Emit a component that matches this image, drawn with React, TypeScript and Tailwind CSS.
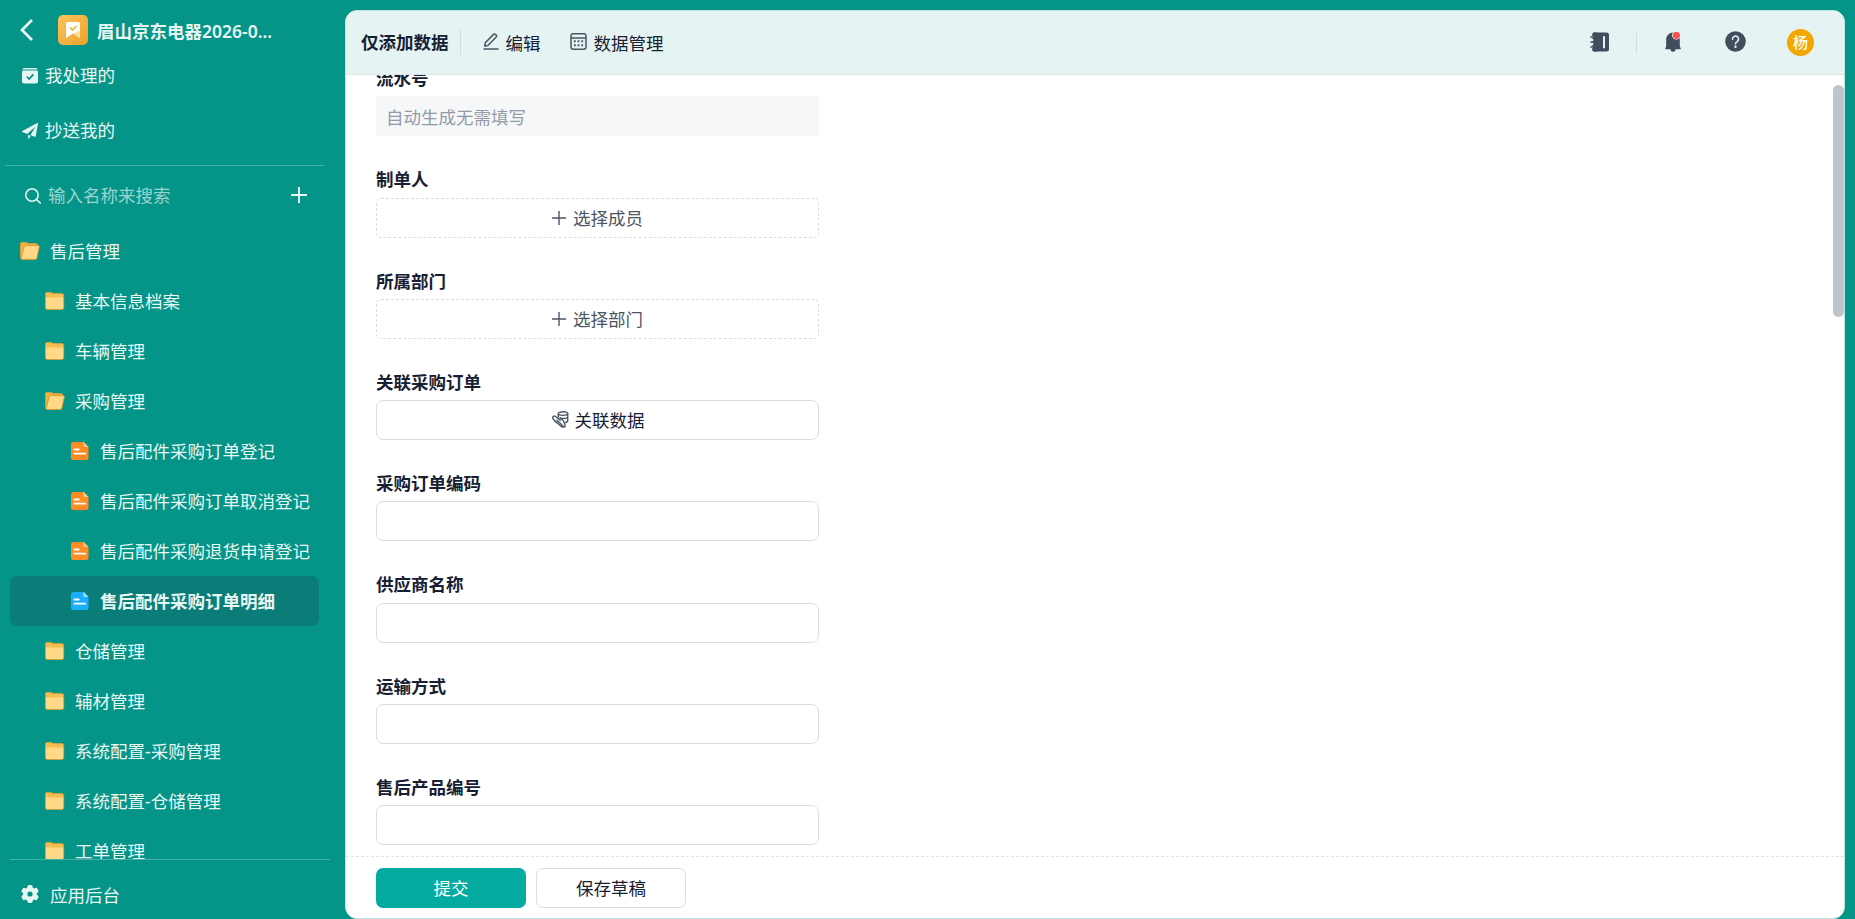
import React from "react";

type NodeKind = "folder" | "open" | "form" | "active";

interface TreeNode {
  label: string;
  kind: NodeKind;
  level: 0 | 1 | 2;
}

const TREE: TreeNode[] = [
  { label: "售后管理", kind: "open", level: 0 },
  { label: "基本信息档案", kind: "folder", level: 1 },
  { label: "车辆管理", kind: "folder", level: 1 },
  { label: "采购管理", kind: "open", level: 1 },
  { label: "售后配件采购订单登记", kind: "form", level: 2 },
  { label: "售后配件采购订单取消登记", kind: "form", level: 2 },
  { label: "售后配件采购退货申请登记", kind: "form", level: 2 },
  { label: "售后配件采购订单明细", kind: "active", level: 2 },
  { label: "仓储管理", kind: "folder", level: 1 },
  { label: "辅材管理", kind: "folder", level: 1 },
  { label: "系统配置-采购管理", kind: "folder", level: 1 },
  { label: "系统配置-仓储管理", kind: "folder", level: 1 },
  { label: "工单管理", kind: "folder", level: 1 },
];

const INDENT = ["pl-[10px]", "pl-[35px]", "pl-[60px]"];

interface Field {
  label: string;
  type: "serial" | "member" | "dept" | "relation" | "input";
}

const FIELDS: Field[] = [
  { label: "流水号", type: "serial" },
  { label: "制单人", type: "member" },
  { label: "所属部门", type: "dept" },
  { label: "关联采购订单", type: "relation" },
  { label: "采购订单编码", type: "input" },
  { label: "供应商名称", type: "input" },
  { label: "运输方式", type: "input" },
  { label: "售后产品编号", type: "input" },
];

function FolderIcon() {
  return (
    <svg width="20" height="20" viewBox="0 0 20 20">
      <path
        d="M.4 3A1.600 1.600 0 0 1 2 1.400h3.600c.5 0 .9.1 1.300.4L8.200 2.600H17A1.800 1.800 0 0 1 18.700 4.400v12.200a1.800 1.800 0 0 1-1.800 1.800H2.200A1.800 1.800 0 0 1 .4 16.600z"
        fill="#f7bd52"
        stroke="#e3a02f"
        strokeWidth=".8"
      />
      <path d="M.9 6.400h17.300v10.100a1.500 1.500 0 0 1-1.500 1.500H2.400a1.500 1.500 0 0 1-1.500-1.500z" fill="#ffd988" />
    </svg>
  );
}

function OpenFolderIcon() {
  return (
    <svg width="20" height="20" viewBox="0 0 20 20">
      <path
        d="M.4 3A1.600 1.600 0 0 1 2 1.400h3.600c.5 0 .9.1 1.300.4L8.200 2.600h7.600a1.800 1.800 0 0 1 1.800 1.800V12l-4 6H2a1.600 1.600 0 0 1-1.600-1.600z"
        fill="#f0b244"
        stroke="#e3a02f"
        strokeWidth=".8"
      />
      <path
        d="M5.600 4.600h12.200c1.200 0 1.700.7 1.400 1.700l-2.300 10.700c-.2.900-.8 1.400-1.700 1.400H2.400c-.9 0-1.300-.6-1.100-1.400L4 6C4.200 5.100 4.700 4.600 5.600 4.600z"
        fill="#ffd988"
        stroke="#d99a2c"
        strokeWidth=".9"
      />
    </svg>
  );
}

function FormIcon({ active }: { active: boolean }) {
  return (
    <svg width="18" height="20" viewBox="0 0 18 20">
      <path
        d="M2.500 1h10l5 5v10.500a2.500 2.500 0 0 1-2.500 2.500H2.500A2.500 2.500 0 0 1 0 16.500v-13A2.500 2.500 0 0 1 2.500 1z"
        fill={active ? "#1baeff" : "#ff8c24"}
      />
      <path d="M12.300.6l5.300 5.300h-3.800a1.500 1.500 0 0 1-1.500-1.500z" fill={active ? "#a3dcfb" : "#fbc48a"} />
      <path d="M3.400 8.500h4.300M3.400 12.700h10.800" stroke="#fff" strokeWidth="1.800" strokeLinecap="round" />
    </svg>
  );
}

function NodeIcon({ kind }: { kind: NodeKind }) {
  if (kind === "folder") return <FolderIcon />;
  if (kind === "open") return <OpenFolderIcon />;
  return (
    <span className="pl-[1px]">
      <FormIcon active={kind === "active"} />
    </span>
  );
}

function PlusIcon() {
  return (
    <svg width="14" height="14" viewBox="0 0 14 14" fill="none" stroke="currentColor" strokeWidth="1.400">
      <path d="M7 0v14M0 7h14" />
    </svg>
  );
}

// Hand holding a stack of data
function RelationIcon() {
  return (
    <svg width="17" height="17" viewBox="0 0 17 17" fill="none" stroke="#4b5563" strokeWidth="1.400" strokeLinejoin="round" strokeLinecap="round">
      <ellipse cx="11" cy="2.600" rx="4.700" ry="1.800" />
      <path d="M6.300 2.600v3.600M15.700 2.600v7.200c0 1-1.100 1.600-2.700 1.800M8.500 7.100c3.200.9 7.200.3 7.200-1" />
      <path d="M8.200 9.200L3.300 5.300C1.800 4.300.1 6 1 7.600c1.100 2.100 2.800 3.600 4.700 4.700" />
      <path d="M4.600 9.200l3.100 2.400 3.500 3.900c1.100 1 2.500 0 1.900-1.400L11.400 9.800 8 6.900" />
      <path d="M5.700 12.300l3.900 3.300c.6.500 1.400.5 1.900 0" />
    </svg>
  );
}

function Sidebar() {
  return (
    <aside className="flex w-[345px] shrink-0 flex-col text-[#e8f6f4]">
      <div className="flex h-12 shrink-0 items-center pl-5 pt-[12px]">
        <svg width="13" height="22" viewBox="0 0 13 22" fill="none" stroke="#e8f6f4" strokeWidth="2.800">
          <path d="M12 1L2 11l10 10" />
        </svg>
        <div className="ml-[25px] flex h-[30px] w-[30px] items-center justify-center rounded-[5px] bg-linear-to-br from-[#fbc25c] to-[#eda323]">
          <svg width="14" height="16" viewBox="0 0 14 16">
            <path d="M0 1.500A1.500 1.500 0 0 1 1.500 0h11A1.500 1.500 0 0 1 14 1.500V16l-7-4.500L0 16z" fill="#fff" />
            <path d="M14 8v8l-7-4.500L0 16z" fill="#fbdca5" />
            <path d="M4 5.500l2.500 2.500L10.500 4" fill="none" stroke="#f2ae3a" strokeWidth="1.600" />
          </svg>
        </div>
        <span className="ml-[9px] whitespace-nowrap pt-[3px] font-bold">
          眉山京东电器<span className="font-semibold">2026-0...</span>
        </span>
      </div>

      {/* Process shortcuts */}
      <div className="flex h-[55px] shrink-0 items-center gap-[7px] pl-[22px]">
        <svg width="16" height="16" viewBox="0 0 16 16">
          <path d="M2 0h12a1.500 1.500 0 0 1 1.400 1.500H.6A1.500 1.500 0 0 1 2 0z" fill="#e8f6f4" />
          <path d="M.5 2.600h15L16 4v9.500a2 2 0 0 1-2 2H2a2 2 0 0 1-2-2V4z" fill="#e8f6f4" />
          <path d="M4.800 8.500L7.200 11l4.200-4.700" fill="none" stroke="#059488" strokeWidth="1.800" />
        </svg>
        <span>我处理的</span>
      </div>
      <div className="flex h-[55px] shrink-0 items-center gap-[7px] pl-[22px]">
        <svg width="16" height="16" viewBox="0 0 16 16" fill="#e8f6f4">
          <path d="M15.200.1c.5-.3.9 0 .8.500l-2.300 12.700c-.1.500-.5.700-1 .5L8.500 12l5-8.500L5.200 11 .4 9c-.6-.2-.5-.8 0-1z" />
          <path d="M6.200 11.700l2.500 1-1.400 2.600c-.4.7-1.100.5-1.100-.2z" />
        </svg>
        <span>抄送我的</span>
      </div>
      <div className="ml-[5px] mt-[7px] h-px w-[319px] shrink-0 bg-[#46b0a8]" />

      {/* Search */}
      <div className="flex h-[60px] shrink-0 items-center pb-[1px] pl-[25px]">
        <svg width="16" height="16" viewBox="0 0 16 16" fill="none" stroke="#e8f6f4" strokeWidth="1.500">
          <circle cx="7" cy="7" r="6.200" />
          <path d="M11.500 11.500l3.800 3.600" strokeLinecap="round" />
        </svg>
        <span className="ml-[7px] text-[#9bd4cf]">输入名称来搜索</span>
        <svg className="ml-auto mr-[38px] -mt-[2px] shrink-0" width="16" height="16" viewBox="0 0 16 16" stroke="#e8f6f4" strokeWidth="2">
          <path d="M8 0v16M0 8h16" />
        </svg>
      </div>

      {/* Form tree */}
      <nav className="h-[633px] shrink-0 overflow-hidden px-[10px]">
        {TREE.map((n) => (
          <div
            key={n.label}
            className={`flex h-[50px] w-[309px] items-center rounded-[7px] whitespace-nowrap ${INDENT[n.level]} ${
              n.kind === "active" ? "bg-[#0b7d78] font-bold" : ""
            }`}
          >
            <span className="flex w-[30px] shrink-0">
              <NodeIcon kind={n.kind} />
            </span>
            <span>{n.label}</span>
          </div>
        ))}
      </nav>
      <div className="ml-[10px] h-px w-[320px] shrink-0 bg-[#46b0a8]" />
      <div className="flex h-[59px] shrink-0 items-center gap-[11px] pl-[21px] pt-[11px]">
        <svg className="-mt-[2px]" width="18" height="18" viewBox="0 0 18 18">
          <g fill="#e8f6f4">
            <circle cx="9" cy="9" r="6.900" />
            <rect x="6.400" y="0" width="5.200" height="18" rx="1.800" />
            <rect x="6.400" y="0" width="5.200" height="18" rx="1.800" transform="rotate(60 9 9)" />
            <rect x="6.400" y="0" width="5.200" height="18" rx="1.800" transform="rotate(120 9 9)" />
          </g>
          <circle cx="9" cy="9" r="2.600" fill="#059488" />
        </svg>
        <span>应用后台</span>
      </div>
    </aside>
  );
}

function Header() {
  return (
    <header className="flex h-16 shrink-0 items-center border-b border-[#dfe4e8] bg-[#e5f4f3] pl-[15px] pr-[30px]">
      <span className="font-bold">仅添加数据</span>
      <div className="ml-[11px] h-[25px] w-px bg-[#cfdfe1]" />
      <div className="ml-[22px] flex items-center gap-[7px]">
        <svg className="-mt-[3px]" width="16" height="17" viewBox="0 0 16 17" fill="none" stroke="#4b5563" strokeWidth="1.500" strokeLinejoin="round">
          <path d="M2.300 9.800L10.600 1.400c.6-.6 1.300-.6 1.900 0l.7.700c.6.6.6 1.300 0 1.900L4.900 12.500l-3.200.6z" />
          <path d="M.5 16h15" />
        </svg>
        <span className="pt-[2px]">编辑</span>
      </div>
      <div className="ml-[29px] flex items-center gap-[7px]">
        <svg className="-mt-[3px]" width="17" height="17" viewBox="0 0 17 17" fill="none" stroke="#4b5563" strokeWidth="1.500">
          <rect x="1" y=".8" width="15" height="15.400" rx="2.200" />
          <path d="M1 5h15" />
          <path
            d="M3.900 8.200h1.800M7.600 8.200h1.800M11.300 8.200h1.800M3.900 12.300h1.800M7.600 12.300h1.800M11.300 12.300h1.800"
            strokeWidth="1.900"
          />
        </svg>
        <span className="pt-[2px]">数据管理</span>
      </div>

      <div className="ml-auto flex items-center">
        <svg className="-mt-[2px]" width="19" height="20" viewBox="0 0 19 20">
          <rect x="2" y=".5" width="17" height="19" rx="2.500" fill="#414d5c" />
          <path d="M.9 5h2.600M.9 8.300h2.600M.9 11.700h2.600M.9 15h2.600" stroke="#e5f4f3" strokeWidth="2.400" strokeLinecap="round" />
          <path d="M.9 5h2.600M.9 10h2.600M.9 15h2.600" stroke="#414d5c" strokeWidth="1.500" strokeLinecap="round" />
          <rect x="3.200" y=".5" width="4" height="19" fill="#414d5c" />
          <path d="M14 5v10.500" stroke="#e5f4f3" strokeWidth="2" strokeLinecap="round" />
        </svg>
        <div className="ml-[27px] h-5 w-px bg-[#cfdfe1]" />
        <svg className="-mt-[1px] ml-[28px]" width="16" height="22" viewBox="0 0 16 22">
          <path d="M8 1.500a6.800 6.800 0 0 1 6.800 6.800v7l1 2.200c.1.400-.1.700-.5.700H10.500a2.500 2.500 0 0 1-5 0H.7c-.4 0-.6-.3-.5-.7l1-2.200v-7A6.800 6.800 0 0 1 8 1.500z" fill="#414d5c" />
          <circle cx="11.400" cy="4.300" r="4.300" fill="#fff" />
          <circle cx="11.400" cy="4.300" r="3.600" fill="#f65353" />
        </svg>
        <svg className="-mt-[2px] ml-[44px]" width="21" height="21" viewBox="0 0 21 21">
          <circle cx="10.500" cy="10.500" r="10.300" fill="#414d5c" />
          <path
            d="M7.500 8.200a3 3 0 1 1 4.900 2.200c-1.100.8-1.900 1.200-1.900 2.600"
            fill="none"
            stroke="#e5f4f3"
            strokeWidth="1.600"
            strokeLinecap="round"
          />
          <circle cx="10.500" cy="15.800" r="1.200" fill="#e5f4f3" />
        </svg>
        <div className="ml-[41px] flex h-[27px] w-[27px] items-center justify-center rounded-full bg-[#f3a704] text-[15px] font-medium text-white">
          杨
        </div>
      </div>
    </header>
  );
}

function FieldBox({ type }: { type: Field["type"] }) {
  if (type === "serial") {
    return (
      <div className="flex h-10 items-center rounded-[3px] bg-[#f6f7f9] px-[10px] pt-[2px] text-[#949aa5]">
        自动生成无需填写
      </div>
    );
  }
  if (type === "member" || type === "dept") {
    return (
      <button className="flex h-10 w-full items-center justify-center gap-[7px] rounded-[5px] border border-dashed border-[#d9dde3] text-[#4b5563]">
        <PlusIcon />
        <span className="pt-[1px]">{type === "member" ? "选择成员" : "选择部门"}</span>
      </button>
    );
  }
  if (type === "relation") {
    return (
      <button className="flex h-10 w-full items-center justify-center gap-[6px] rounded-[7px] border border-[#d9dee5] pl-[1px]">
        <span className="-mt-[2px]">
          <RelationIcon />
        </span>
        关联数据
      </button>
    );
  }
  return <input className="block h-10 w-full rounded-[7px] border border-[#d9dee5] px-[10px]" />;
}

export default function App() {
  return (
    <div className="flex h-[919px] w-[1855px] overflow-hidden bg-[#059488] font-['Noto_Sans','Noto_Sans_CJK_SC',sans-serif] text-[17.5px] leading-[26.25px]">
      <Sidebar />
      <main className="mt-[10px] flex h-[909px] w-[1500px] flex-col overflow-hidden rounded-[12px] border border-[#bfe6e2] bg-white text-[#172033]">
        <Header />
        <div className="flex h-[781px] shrink-0 justify-between overflow-hidden">
          <div className="-mt-[10px] ml-[30px] w-[443px]">
            {FIELDS.map((f) => (
              <div key={f.label} className="h-[101.25px]">
                <div className="mb-[5px] font-bold">{f.label}</div>
                <FieldBox type={f.type} />
              </div>
            ))}
          </div>
          {/* Scrollbar thumb */}
          <div className="mt-[10px] h-[232px] w-[11px] rounded-full bg-[#c0c4cc]" />
        </div>
        <footer className="flex h-[62px] shrink-0 gap-[10px] border-t border-dashed border-[#e1e3e6] pl-[30px] pt-[11px]">
          <button className="h-10 w-[150px] rounded-[7px] bg-[#05aba1] text-white">提交</button>
          <button className="h-10 w-[150px] rounded-[7px] border border-[#d9dee5]">保存草稿</button>
        </footer>
      </main>
    </div>
  );
}
